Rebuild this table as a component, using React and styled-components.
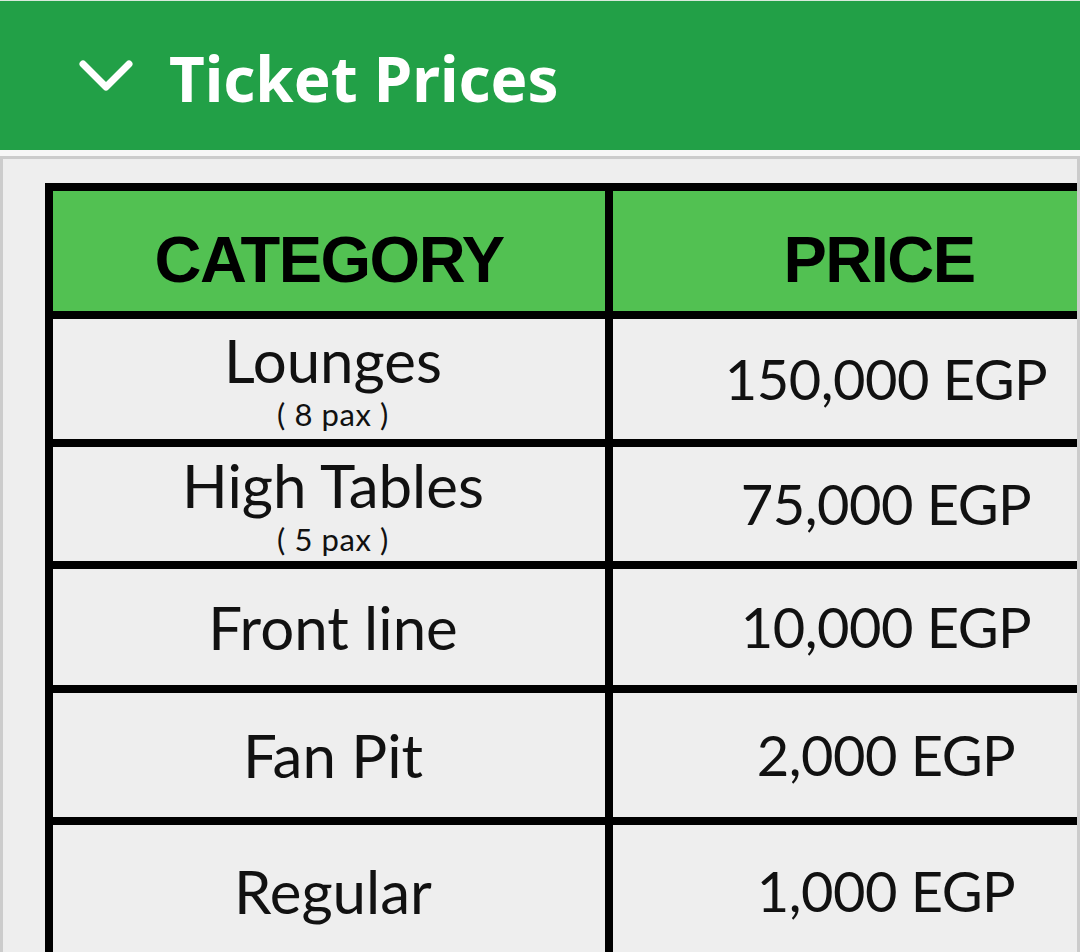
import React from 'react';
import styled, { createGlobalStyle } from 'styled-components';

const prices = [
  { name: 'Lounges', pax: 8, price: '150,000 EGP', height: 120 },
  { name: 'High Tables', pax: 5, price: '75,000 EGP', height: 114 },
  { name: 'Front line', price: '10,000 EGP', height: 116 },
  { name: 'Fan Pit', price: '2,000 EGP', height: 124 },
  { name: 'Regular', price: '1,000 EGP', height: 132 },
];

const App = () => {
  return (
    <>
      <GlobalStyle />
      <Page>
        <SectionHeader>
          <Chevron viewBox="0 0 58 40">
            <path d="M6 8 L29 31 L52 8" />
          </Chevron>
          <Title>Ticket Prices</Title>
        </SectionHeader>
        <Panel>
          <PriceTable>
            <HeadCell>CATEGORY</HeadCell>
            <HeadCell>PRICE</HeadCell>
            {prices.map((row) => (
              <React.Fragment key={row.name}>
                <Cell $height={row.height}>
                  <CategoryName>{row.name}</CategoryName>
                  {row.pax && <Pax>( {row.pax} pax )</Pax>}
                </Cell>
                <Cell $height={row.height}>
                  <PriceText>{row.price}</PriceText>
                </Cell>
              </React.Fragment>
            ))}
          </PriceTable>
        </Panel>
      </Page>
    </>
  );
};

export default App;

const GlobalStyle = createGlobalStyle`
  html, body {
    margin:0;
    padding:0;
    background:#f7f7f7;
    overflow:hidden;
  }
`

const Page = styled.div`
  width:1080px;
  height:952px;
  display:flex;
  flex-direction:column;
  gap:6px;
`

const SectionHeader = styled.div`
  height:150px;
  box-sizing:border-box;
  border-top:1px solid #d9e9dc;
  background:#22a047;
  display:flex;
  align-items:center;
  gap:34px;
  padding:0 0 0 77px;
`

const Chevron = styled.svg`
  width:58px;
  height:40px;
  fill:none;
  stroke:#ffffff;
  stroke-width:7;
  stroke-linecap:round;
  stroke-linejoin:round;
`

const Title = styled.h1`
  margin:0;
  font-family:"Noto Sans", sans-serif;
  font-weight:700;
  font-size:62px;
  color:#ffffff;
  line-height:1;
  padding-top:4px;
`

const Panel = styled.div`
  flex:1;
  background:#eeeeee;
  border:3px solid #cccccc;
  border-bottom:none;
  overflow:hidden;
  padding:24px 0 0 42px;
`

const PriceTable = styled.div`
  display:grid;
  grid-template-columns:552px 532px;
  gap:8px;
  padding:8px;
  width:max-content;
  background:#000000;
`

const HeadCell = styled.div`
  height:120px;
  box-sizing:border-box;
  padding-top:16px;
  background:#52c152;
  display:flex;
  align-items:center;
  justify-content:center;
  font-family:"Liberation Sans", Arial, sans-serif;
  font-weight:700;
  font-size:65px;
  letter-spacing:-1.5px;
  color:#000000;
`

const Cell = styled.div`
  height:${(p) => p.$height}px;
  background:#eeeeee;
  display:flex;
  flex-direction:column;
  align-items:center;
  justify-content:center;
  color:#111111;
  font-family:Lato, "Open Sans", sans-serif;
`

const CategoryName = styled.div`
  font-size:60px;
  line-height:1.2;
  padding-left:8px;
`

const Pax = styled.div`
  font-size:31px;
  line-height:1.2;
  letter-spacing:0.6px;
  padding-left:8px;
`

const PriceText = styled.div`
  font-size:56px;
  line-height:1;
  letter-spacing:-0.5px;
  padding-left:14px;
`
